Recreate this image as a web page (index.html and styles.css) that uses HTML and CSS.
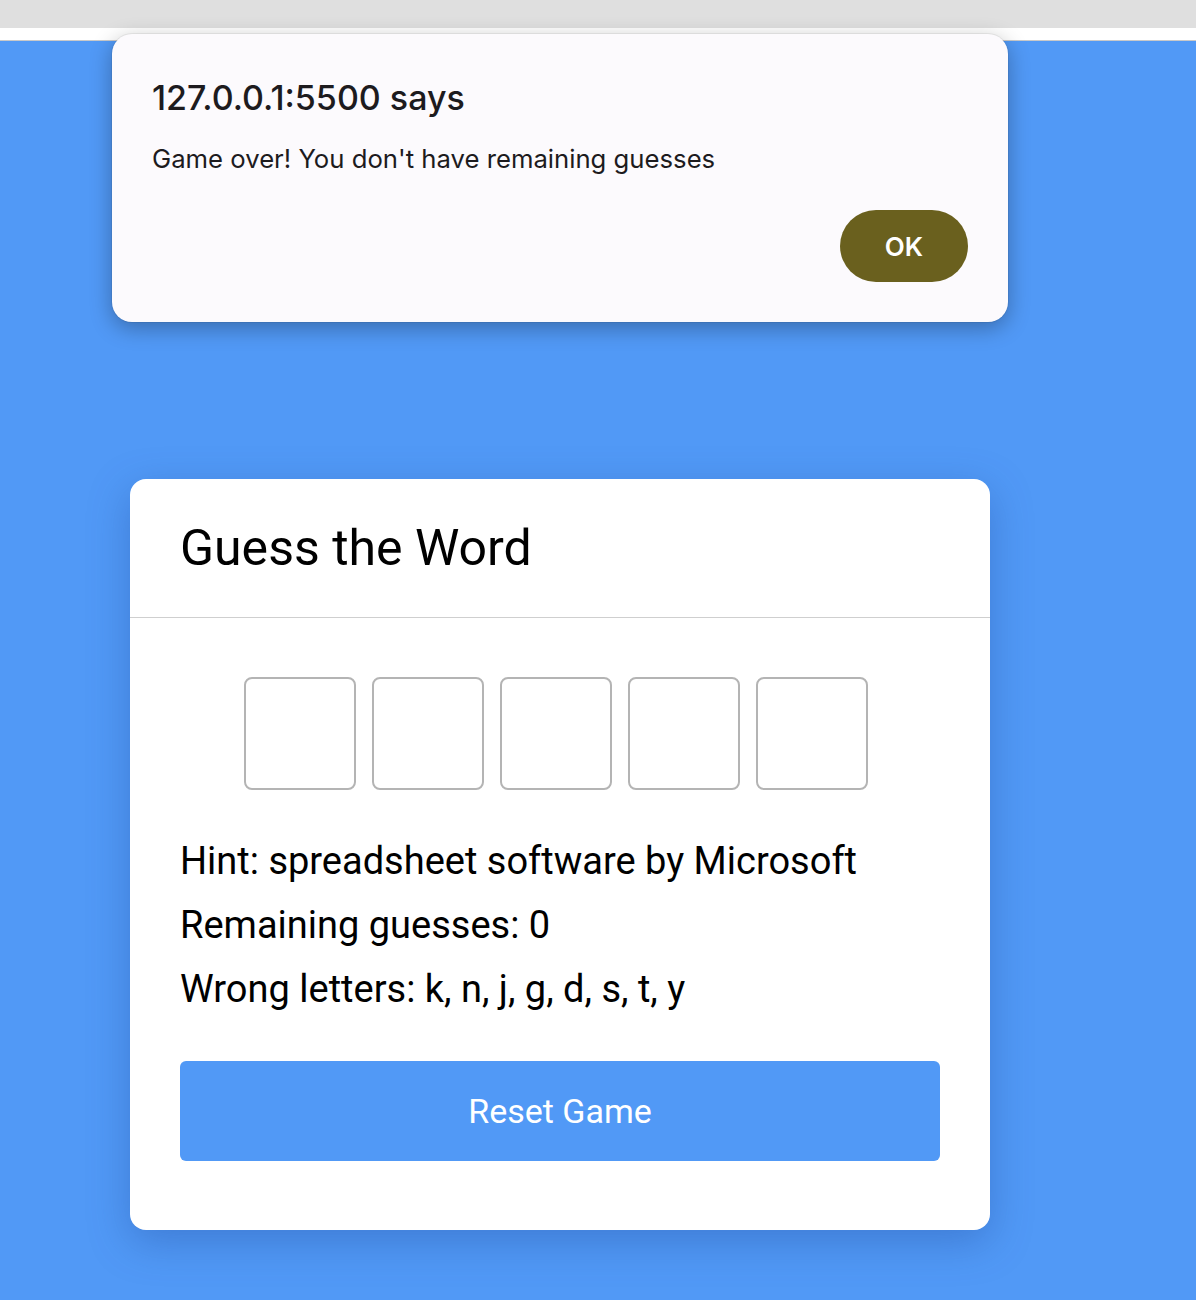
FILE: index.html
```html
<!DOCTYPE html>
<html>
<head>
<meta charset="utf-8">
<link rel="stylesheet" href="styles.css">
</head>
<body>
<div class="chrome"></div>
<div class="strip"></div>
<main class="page">
  <section class="card">
    <header class="card-head"><h1>Guess the Word</h1></header>
    <div class="card-body">
      <div class="boxes">
        <div class="box"></div><div class="box"></div><div class="box"></div><div class="box"></div><div class="box"></div>
      </div>
      <p class="line">Hint: spreadsheet software by Microsoft</p>
      <p class="line">Remaining guesses: 0</p>
      <p class="line">Wrong letters: k, n, j, g, d, s, t, y</p>
      <button class="reset">Reset Game</button>
    </div>
  </section>
</main>
<div class="dialog">
  <div class="d-title">127.0.0.1:5500 says</div>
  <div class="d-msg">Game over! You don't have remaining guesses</div>
  <div class="d-actions"><button class="ok">OK</button></div>
</div>
</body>
</html>
```
FILE: styles.css
```css
html, body { margin: 0; padding: 0; }
body {
  width: 1196px;
  height: 1300px;
  overflow: hidden;
  background: #5199f6;
  font-family: Roboto, "Liberation Sans", sans-serif;
}
.chrome { height: 28px; background: #dfdfdf; }
.strip { height: 12px; background: #ffffff; border-bottom: 1px solid #c9c9c9; }
.page {
  background: #5199f6;
  padding-top: 438px;
  padding-left: 130px;
  height: 821px;
}
.card {
  width: 860px;
  background: #fff;
  border-radius: 16px;
  box-shadow: 0 12px 40px rgba(30, 70, 150, 0.35);
}
.card-head {
  height: 138px;
  border-bottom: 1.5px solid #cfcfcf;
  padding: 0 50px;
  display: flex;
  align-items: center;
}
.card-head h1 {
  margin: 0;
  font-weight: 400;
  font-size: 50px;
  color: #000;
}
.card-body { padding: 59px 50px 69px; }
.boxes {
  display: flex;
  justify-content: center;
  gap: 16px;
  margin-right: 8px;
  margin-bottom: 39px;
}
.box {
  width: 108px;
  height: 109px;
  border: 2px solid #b4b4b4;
  border-radius: 8px;
}
.line {
  margin: 0;
  font-size: 38px;
  line-height: 64px;
  color: #000;
}
.reset {
  display: block;
  width: 760px;
  height: 100px;
  margin-top: 40px;
  border: none;
  border-radius: 6px;
  background: #5199f6;
  color: #fff;
  font-family: Roboto, "Liberation Sans", sans-serif;
  font-size: 34px;
}
.dialog {
  position: absolute;
  left: 112px;
  top: 34px;
  width: 896px;
  height: 288px;
  box-sizing: border-box;
  padding: 44px 40px 40px;
  background: #fcfafd;
  border-radius: 20px;
  box-shadow: 0 6px 22px rgba(0, 0, 0, 0.3), 0 0 0 1px rgba(0,0,0,0.06);
  font-family: Inter, "Noto Sans", sans-serif;
  color: #1d1b1e;
}
.d-title {
  font-size: 34px;
  font-weight: 500;
  line-height: 40px;
}
.d-msg {
  margin-top: 26px;
  font-size: 25.7px;
  line-height: 30px;
}
.d-actions {
  display: flex;
  justify-content: flex-end;
  margin-top: 36px;
}
.ok {
  width: 128px;
  height: 72px;
  border: none;
  border-radius: 36px;
  background: #6a601e;
  color: #fff;
  font-family: Inter, "Noto Sans", sans-serif;
  font-weight: 600;
  font-size: 26px;
}
```
